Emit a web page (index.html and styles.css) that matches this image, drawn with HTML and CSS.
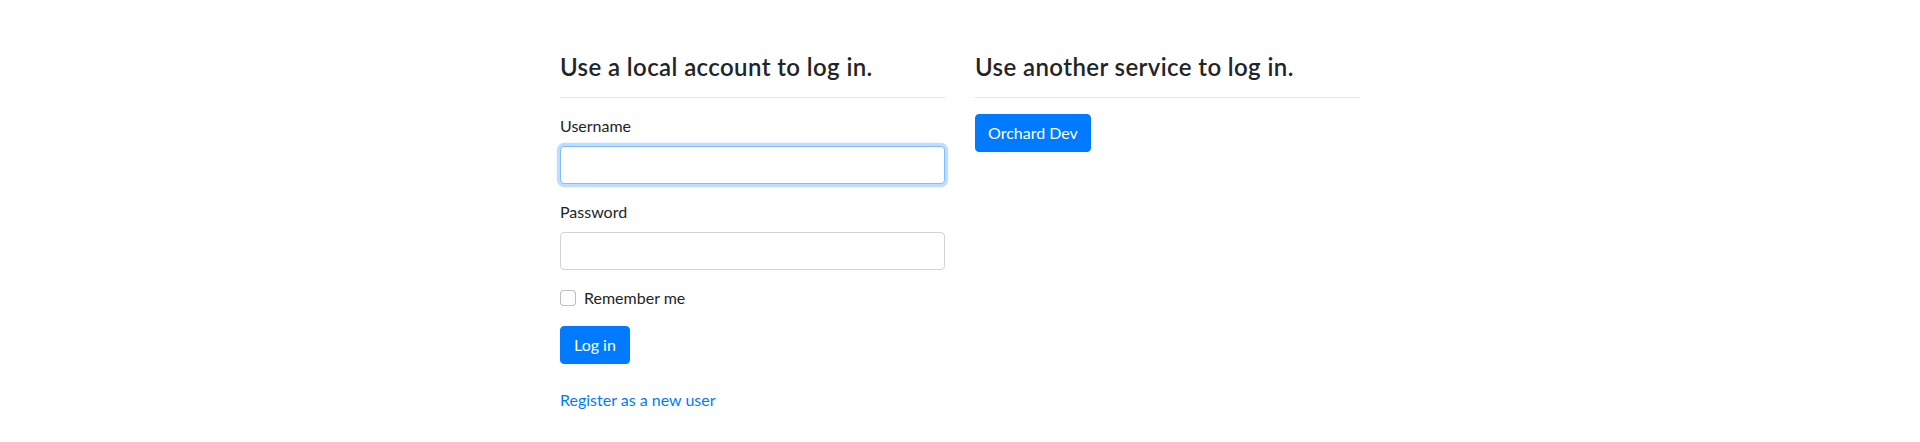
FILE: index.html
```html
<!DOCTYPE html>
<html lang="en">
<head>
<meta charset="utf-8">
<title>Log in</title>
<link rel="stylesheet" href="styles.css">
</head>
<body>
<main class="login">
  <section class="panel">
    <h4 class="panel-title">Use a local account to log in.</h4>
    <hr class="rule">
    <form class="login-form">
      <div class="form-group">
        <label class="form-label" for="username">Username</label>
        <input class="form-control is-focused" id="username" type="text">
      </div>
      <div class="form-group">
        <label class="form-label" for="password">Password</label>
        <input class="form-control" id="password" type="password">
      </div>
      <div class="form-check">
        <input class="check-input" id="remember" type="checkbox">
        <label class="check-label" for="remember">Remember me</label>
      </div>
      <div class="actions">
        <button class="btn btn-login" type="button">Log in</button>
      </div>
    </form>
    <p class="register"><a class="link" href="#">Register as a new user</a></p>
  </section>
  <section class="panel">
    <h4 class="panel-title">Use another service to log in.</h4>
    <hr class="rule">
    <div class="providers">
      <button class="btn" type="button">Orchard Dev</button>
    </div>
  </section>
</main>
</body>
</html>
```
FILE: styles.css
```css
* { box-sizing: border-box; }
body {
  margin: 0;
  background: #fff;
  color: #212529;
  font-family: Lato, "Noto Sans", sans-serif;
  font-size: 16px;
  line-height: 24px;
}
.login {
  display: flex;
  justify-content: center;
  gap: 30px;
  padding-top: 53px;
}
.panel {
  width: 385px;
}
.panel-title {
  margin: 0;
  font-size: 24px;
  line-height: 28.8px;
  font-weight: 600;
  letter-spacing: 0.4px;
  color: #212529;
}
.rule {
  margin: 15px 0 16px;
  border: 0;
  border-top: 1px solid rgba(0, 0, 0, 0.1);
  height: 0;
}
.login-form { margin: 0; }
.form-group { margin-bottom: 16px; }
.form-label {
  display: block;
  margin-bottom: 8px;
}
.form-control {
  display: block;
  width: 100%;
  height: 38px;
  padding: 6px 12px;
  font: inherit;
  color: #495057;
  background: #fff;
  border: 1px solid #ced4da;
  border-radius: 4px;
  outline: none;
}
.form-control.is-focused {
  border-color: #80bdff;
  box-shadow: 0 0 0 3.2px rgba(0, 123, 255, 0.25);
}
.form-check {
  display: flex;
  align-items: center;
  gap: 8px;
  height: 24px;
  margin-bottom: 16px;
}
.check-input {
  appearance: none;
  -webkit-appearance: none;
  margin: 0;
  width: 16px;
  height: 16px;
  border: 1px solid rgba(0, 0, 0, 0.25);
  border-radius: 4px;
  background: #fff;
}
.btn {
  display: inline-block;
  height: 38px;
  padding: 6px 12px;
  font: inherit;
  color: #fff;
  background: #007bff;
  border: 1px solid #007bff;
  border-radius: 4px;
  cursor: pointer;
}
.btn-login {
  padding: 6px 13px;
}
.register {
  margin: 24px 0 0;
}
.link {
  color: #007bff;
  text-decoration: none;
}
```
